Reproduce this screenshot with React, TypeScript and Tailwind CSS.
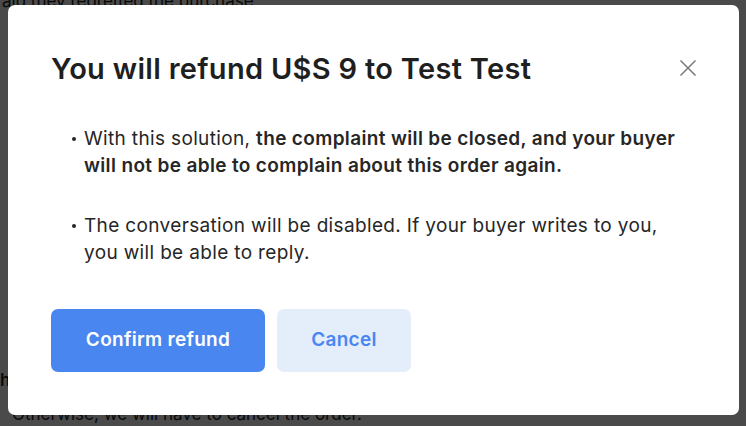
import React from "react";

export default function App() {
  const font = { fontFamily: 'Inter, "Open Sans", "Liberation Sans", sans-serif' };
  return (
    <div className="relative h-[426px] w-[746px] overflow-hidden bg-white text-[#222]" style={font}>
      <div className="flex h-full flex-col justify-between">
        <p className="-mt-[9px] pl-[2px] text-[17px] leading-[20px]">aid they regretted the purchase</p>
        <div className="pb-[2px]">
          <p className="text-[17px] leading-[20px] font-semibold">h</p>
          <p className="mt-[14px] pl-[12px] text-[17px] leading-[20px]">Otherwise, we will have to cancel the order.</p>
        </div>
      </div>
      <div className="absolute inset-0 flex bg-[#000000]/[0.71] pb-[11px] pl-[8px] pr-[7px] pt-[5px]">
        <div className="flex flex-1 flex-col rounded-[7px] bg-white pl-[43px] pr-[40px] pt-[46px]">
          <div className="flex items-start justify-between">
            <h1 className="text-[29px] font-semibold leading-[36px] tracking-[0.3px] text-[#1f1f1f]">
              You will refund U$S 9 to Test Test
            </h1>
            <button className="mt-[8px] mr-[2px] text-[#7a7a7a]" aria-label="Close">
              <svg width="18" height="18" viewBox="0 0 18 18" fill="none" stroke="currentColor" strokeWidth="1.5">
                <path d="M1.5 1.5 L16.5 16.5 M16.5 1.5 L1.5 16.5" />
              </svg>
            </button>
          </div>
          <ul className="mt-[38px] flex flex-col gap-[33px] pl-[21px] text-[19px] leading-[27px] tracking-[0.35px] text-[#262626]">
            <li className="relative pl-[12px] pr-[6px]">
              <span className="absolute left-0 top-[12px] h-[4px] w-[4px] rounded-full bg-[#262626]" />
              With this solution,{" "}
              <b className="font-semibold">
                the complaint will be closed, and your buyer will not be able to complain about this order again.
              </b>
            </li>
            <li className="relative pl-[12px] pr-[6px]">
              <span className="absolute left-0 top-[12px] h-[4px] w-[4px] rounded-full bg-[#262626]" />
              The conversation will be disabled. If your buyer writes to you, you will be able to reply.
            </li>
          </ul>
          <div className="mt-[43px] flex gap-[12px]">
            <button className="h-[63px] w-[214px] rounded-[7px] bg-[#4a86f0] text-[19px] font-semibold tracking-[0.3px] text-white">
              Confirm refund
            </button>
            <button className="h-[63px] w-[134px] rounded-[7px] bg-[#e4edfa] text-[19px] font-semibold tracking-[0.3px] text-[#4a86f0]">
              Cancel
            </button>
          </div>
        </div>
      </div>
    </div>
  );
}
